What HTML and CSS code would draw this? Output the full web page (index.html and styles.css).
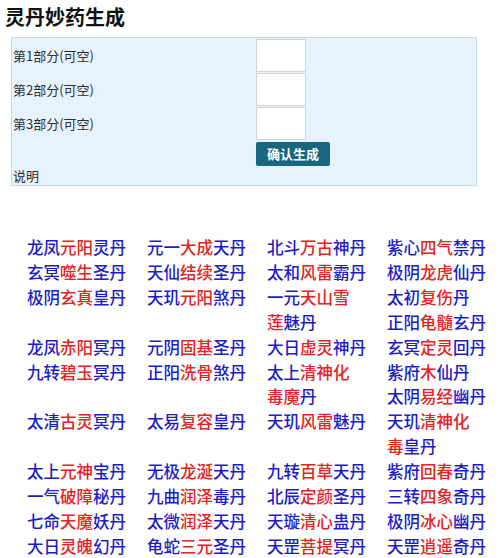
FILE: index.html
```html
<!DOCTYPE html>
<html lang="zh-CN">
<head>
<meta charset="utf-8">
<title>灵丹妙药生成</title>
<link rel="stylesheet" href="styles.css">
</head>
<body>
<h1 class="title">灵丹妙药生成</h1>
<form class="gen-form">
  <label class="lbl" for="p1">第1部分(可空)</label><input class="inp" id="p1" type="text">
  <label class="lbl" for="p2">第2部分(可空)</label><input class="inp" id="p2" type="text">
  <label class="lbl" for="p3">第3部分(可空)</label><input class="inp" id="p3" type="text">
  <span class="lbl"></span><div class="btn-cell"><button class="btn" type="button">确认生成</button></div>
  <span class="lbl note">说明</span><span></span>
</form>

<div class="pills">
  <div class="cell">
    <div>龙凤<em>元阳</em>灵丹</div>
    <div>玄冥<em>噬生</em>圣丹</div>
    <div>极阴<em>玄真</em>皇丹</div>
  </div>
  <div class="cell">
    <div>元一<em>大成</em>天丹</div>
    <div>天仙<em>结续</em>圣丹</div>
    <div>天玑<em>元阳</em>煞丹</div>
  </div>
  <div class="cell">
    <div>北斗<em>万古</em>神丹</div>
    <div>太和<em>风雷</em>霸丹</div>
    <div>一元<em>天山雪<br>莲</em>魅丹</div>
  </div>
  <div class="cell">
    <div>紫心<em>四气</em>禁丹</div>
    <div>极阴<em>龙虎</em>仙丹</div>
    <div>太初<em>复伤</em>丹</div>
    <div>正阳<em>龟髓</em>玄丹</div>
  </div>

  <div class="cell">
    <div>龙凤<em>赤阳</em>冥丹</div>
    <div>九转<em>碧玉</em>冥丹</div>
  </div>
  <div class="cell">
    <div>元阴<em>固基</em>圣丹</div>
    <div>正阳<em>洗骨</em>煞丹</div>
  </div>
  <div class="cell">
    <div>大日<em>虚灵</em>神丹</div>
    <div>太上<em>清神化<br>毒魔</em>丹</div>
  </div>
  <div class="cell">
    <div>玄冥<em>定灵</em>回丹</div>
    <div>紫府<em>木</em>仙丹</div>
    <div>太阴<em>易经</em>幽丹</div>
  </div>

  <div class="cell"><div>太清<em>古灵</em>冥丹</div></div>
  <div class="cell"><div>太易<em>复容</em>皇丹</div></div>
  <div class="cell"><div>天玑<em>风雷</em>魅丹</div></div>
  <div class="cell"><div>天玑<em>清神化<br>毒</em>皇丹</div></div>

  <div class="cell">
    <div>太上<em>元神</em>宝丹</div>
    <div>一气<em>破障</em>秘丹</div>
    <div>七命<em>天魔</em>妖丹</div>
    <div>大日<em>灵魄</em>幻丹</div>
  </div>
  <div class="cell">
    <div>无极<em>龙涎</em>天丹</div>
    <div>九曲<em>润泽</em>毒丹</div>
    <div>太微<em>润泽</em>天丹</div>
    <div>龟蛇<em>三元</em>圣丹</div>
  </div>
  <div class="cell">
    <div>九转<em>百草</em>天丹</div>
    <div>北辰<em>定颜</em>圣丹</div>
    <div>天璇<em>清心</em>蛊丹</div>
    <div>天罡<em>菩提</em>冥丹</div>
  </div>
  <div class="cell">
    <div>紫府<em>回春</em>奇丹</div>
    <div>三转<em>四象</em>奇丹</div>
    <div>极阴<em>冰心</em>幽丹</div>
    <div>天罡<em>逍遥</em>奇丹</div>
  </div>
</div>
</body>
</html>
```

FILE: styles.css
```css
html, body {
  margin: 0;
  padding: 0;
  background: #ffffff;
}
body {
  padding: 0 5px;
  font-family: "Noto Sans CJK SC", "Noto Sans", "DejaVu Sans", sans-serif;
  color: #333;
}
.title {
  margin: 5px 0 0 0;
  font-size: 20px;
  line-height: 24px;
  font-weight: bold;
  color: #111;
}
.gen-form {
  margin: 8px 0 0 6px;
  width: 463px;
  border: 1px solid #c9d9e5;
  background: #e6f3fd;
  padding: 1px 0 0 1px;
  display: grid;
  grid-template-columns: 243px 1fr;
  row-gap: 1px;
  align-items: center;
  font-size: 13px;
}
.lbl {
  color: #2e2e2e;
  line-height: 18px;
}
.note {
  line-height: 18px;
}
.inp {
  box-sizing: border-box;
  width: 50px;
  height: 33px;
  margin: 0;
  padding: 0 4px;
  border: 1px solid #d3d3d3;
  background: #fff;
  font-size: 13px;
}
.btn-cell {
  padding-top: 1px;
}
.btn {
  box-sizing: border-box;
  width: 74px;
  height: 24px;
  padding: 0;
  border: none;
  border-radius: 2px;
  background: #18677f;
  color: #fff;
  font-family: "Noto Sans CJK SC", sans-serif;
  font-size: 13px;
  font-weight: bold;
  line-height: 24px;
}
.pills {
  margin: 49px 0 0 12px;
  display: grid;
  grid-template-columns: repeat(4, 120px);
  align-items: start;
  font-size: 16.5px;
  font-weight: 500;
  line-height: 24.9px;
  color: #1c1cc8;
}
.cell {
  padding-left: 10px;
  white-space: nowrap;
}
.pills em {
  font-style: normal;
  color: #e42323;
}
```
